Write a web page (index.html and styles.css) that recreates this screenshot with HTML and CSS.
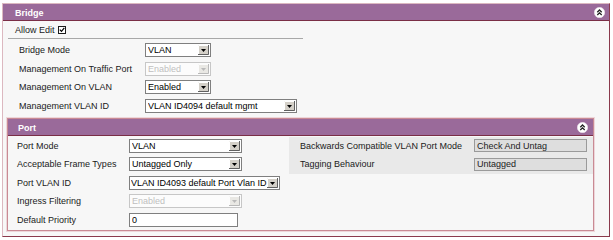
FILE: index.html
```
<!DOCTYPE html>
<html lang="en">
<head>
<meta charset="UTF-8" />
<title>Bridge</title>
<link rel="stylesheet" href="styles.css">
</head>
<body>
<div class="panel outer">
  <div class="panel-head">
    <span>Bridge</span>
    <svg class="toggle" width="11" height="11" viewBox="0 0 11 11"><circle cx="5.5" cy="5.5" r="5.2" fill="#fff" stroke="#e8dbe8" stroke-width="0.6"/><path d="M3.3 5.2 5.5 3 7.7 5.2M3.3 8 5.5 5.8 7.7 8" stroke="#222" stroke-width="1.3" fill="none"/></svg>
  </div>
  <div class="panel-body">
    <div class="allow">Allow Edit <input type="checkbox" class="check" checked></div>
    <hr class="rule">
    <div class="form bridge-form">
      <label>Bridge Mode</label>
      <div><select class="sel w66"><option>VLAN</option></select></div>
      <label>Management On Traffic Port</label>
      <div><select class="sel w66" disabled><option>Enabled</option></select></div>
      <label>Management On VLAN</label>
      <div><select class="sel w66"><option>Enabled</option></select></div>
      <label>Management VLAN ID</label>
      <div><select class="sel w152"><option>VLAN ID4094 default mgmt</option></select></div>
    </div>

    <div class="panel port">
      <div class="panel-head">
        <span>Port</span>
        <svg class="toggle" width="11" height="11" viewBox="0 0 11 11"><circle cx="5.5" cy="5.5" r="5.2" fill="#fff" stroke="#e8dbe8" stroke-width="0.6"/><path d="M3.3 5.2 5.5 3 7.7 5.2M3.3 8 5.5 5.8 7.7 8" stroke="#222" stroke-width="1.3" fill="none"/></svg>
      </div>
      <div class="port-body">
        <div class="form port-form">
          <label>Port Mode</label>
          <div><select class="sel w113"><option>VLAN</option></select></div>
          <label>Acceptable Frame Types</label>
          <div><select class="sel w113"><option>Untagged Only</option></select></div>
          <label>Port VLAN ID</label>
          <div><select class="sel w151"><option>VLAN ID4093 default Port Vlan ID</option></select></div>
          <label>Ingress Filtering</label>
          <div><select class="sel w113" disabled><option>Enabled</option></select></div>
          <label>Default Priority</label>
          <div><input class="txt" type="text" value="0"></div>
        </div>
        <div class="form info">
          <label>Backwards Compatible VLAN Port Mode</label>
          <div><input class="ro" type="text" value="Check And Untag" readonly></div>
          <label>Tagging Behaviour</label>
          <div><input class="ro" type="text" value="Untagged" readonly></div>
        </div>
      </div>
    </div>
  </div>
</div>
</body>
</html>
```

FILE: styles.css
```
* {
  box-sizing: border-box;
}
body {
  margin: 0;
  background: #fff;
  font-family: "Liberation Sans", Arial, sans-serif;
  font-size: 9px;
  color: #1a1a1a;
}
.panel {
  border: 1px solid;
  background: #f7f7f7;
}
.outer {
  margin: 3px 0 0 2px;
  width: 608px;
  height: 234px;
  border-color: #dcb8c0 #8a3a4c #8a3a4c #dcb8c0;
}
.panel-head {
  height: 17px;
  background: #9a6a9a;
  border-bottom: 1px solid #7a2e46;
  color: #fff;
  font-weight: bold;
  display: flex;
  align-items: center;
  justify-content: space-between;
  padding: 0 4px 0 12px;
}
.panel-head span {
  padding-top: 1px;
}
.toggle {
  display: block;
}
.panel-body {
  padding: 0 0 0 4px;
}
.allow {
  height: 17px;
  display: flex;
  align-items: center;
  padding-left: 8px;
  padding-top: 1px;
}
.check {
  appearance: none;
  -webkit-appearance: none;
  width: 8px;
  height: 8px;
  margin: 0 0 0 3px;
  border: 1px solid #1c1c1c;
  background: #fff url("data:image/svg+xml,%3Csvg xmlns='http://www.w3.org/2000/svg' width='6' height='6'%3E%3Cpath d='M0.8 2.6l1.7 1.8 2.8-3.6' stroke='%23000' stroke-width='1.2' fill='none'/%3E%3C/svg%3E") no-repeat center;
}
.rule {
  margin: 0 0 2px 1px;
  width: 295px;
  height: 1px;
  border: 0;
  background: #a8a8a8;
}
.form {
  display: grid;
  grid-auto-rows: 18.5px;
  align-items: center;
}
.form label {
  white-space: nowrap;
}
.form > div {
  display: flex;
  align-items: center;
}
.bridge-form {
  grid-template-columns: 126px auto;
  padding-left: 12px;
}
.sel {
  appearance: none;
  -webkit-appearance: none;
  height: 14px;
  margin: 0;
  padding: 0 13px 0 2px;
  border: 1px solid #7f7f7f;
  border-radius: 0;
  font-family: inherit;
  font-size: 9px;
  color: #000;
  background: #fff url("data:image/svg+xml,%3Csvg xmlns='http://www.w3.org/2000/svg' width='11' height='10'%3E%3Crect width='11' height='10' fill='%23d4d0c8'/%3E%3Cpath d='M0 9.5H10.5V0' stroke='%23606060' fill='none'/%3E%3Cpath d='M0.5 9V0.5H10' stroke='%23fff' fill='none'/%3E%3Cpath d='M3 4h5l-2.5 3z' fill='%23000'/%3E%3C/svg%3E") no-repeat right 1px center;
  line-height: 12px;
}
.sel:disabled {
  color: #a8a8a8;
  border-color: #b4b4b4;
  background-image: url("data:image/svg+xml,%3Csvg xmlns='http://www.w3.org/2000/svg' width='11' height='10'%3E%3Crect width='11' height='10' fill='%23e4e2dc'/%3E%3Cpath d='M0 9.5H10.5V0' stroke='%23a0a0a0' fill='none'/%3E%3Cpath d='M0.5 9V0.5H10' stroke='%23fff' fill='none'/%3E%3Cpath d='M3 4h5l-2.5 3z' fill='%23a0a0a0'/%3E%3C/svg%3E");
}
.w66 { width: 66px; }
.w113 { width: 113px; }
.w151 { width: 151px; padding-left: 1px; padding-right: 12px; }
.w152 { width: 152px; }
.port {
  margin-top: 3px;
  width: 587px;
  height: 113px;
  border-color: #c98a94;
  box-shadow: 0 0 0 1px #edd6da;
}
.port .panel-head {
  padding-left: 10px;
  padding-right: 5px;
}
.port-body {
  display: flex;
  align-items: flex-start;
}
.port-form {
  width: 281px;
  grid-template-columns: 112px auto;
  padding: 0.5px 0 0 9px;
}
.txt {
  width: 109px;
  height: 14px;
  margin: 0;
  padding: 0 2px;
  border: 1px solid #7f7f7f;
  font-family: inherit;
  font-size: 9px;
  color: #000;
  background: #fff;
}
.info {
  flex: 1;
  margin: 0.5px 0 0 0;
  background: #e9e9e9;
  grid-template-columns: 174px auto;
  padding-left: 11px;
}
.ro {
  width: 113px;
  height: 13px;
  margin: 0;
  padding: 0 2px;
  border: 1px solid #9a9a9a;
  font-family: inherit;
  font-size: 9px;
  color: #222;
  background: #dedede;
}
```
